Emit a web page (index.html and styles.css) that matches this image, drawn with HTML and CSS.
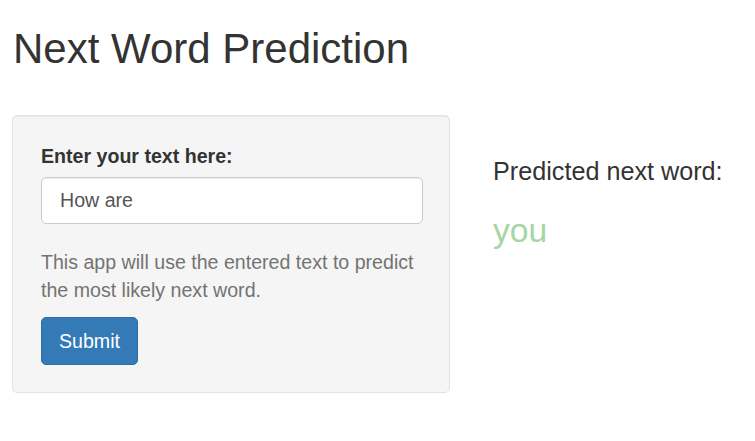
FILE: index.html
```html
<!DOCTYPE html>
<html>
<head>
<meta charset="utf-8">
<title>Next Word Prediction</title>
<link rel="stylesheet" href="styles.css">
</head>
<body>
<div class="page">
  <h2 class="title">Next Word Prediction</h2>
  <div class="row">
    <div class="sidebar">
      <form class="well" onsubmit="return false;">
        <div class="form-group">
          <label class="control-label" for="text">Enter your text here:</label>
          <input id="text" class="form-control" type="text" value="How are">
        </div>
        <span class="help-block">This app will use the entered text to predict the most likely next word.</span>
        <button type="submit" class="btn">Submit</button>
      </form>
    </div>
    <div class="main">
      <h4 class="pred-label">Predicted next word:</h4>
      <div class="pred-word">you</div>
    </div>
  </div>
</div>
</body>
</html>
```

FILE: styles.css
```css
* { box-sizing: border-box; }
html, body { margin: 0; padding: 0; background: #fff; }
body {
  font-family: "Liberation Sans", Arial, Helvetica, sans-serif;
  font-size: 19.6px;
  line-height: 1.42857;
  color: #333;
}
.page {
  padding: 0 12px;
}
.title {
  margin: 26px 0 43px 1px;
  font-size: 42px;
  font-weight: 500;
  line-height: 1.1;
  color: #333;
}
.row {
  display: flex;
  align-items: flex-start;
}
.sidebar {
  width: 438px;
  flex: none;
}
.well {
  margin: 0;
  min-height: 28px;
  padding: 27px 27px 27px 28px;
  background: #f5f5f5;
  border: 1px solid #e3e3e3;
  border-radius: 5px;
  box-shadow: inset 0 1px 1px rgba(0,0,0,.05);
}
.form-group {
  margin-bottom: 24px;
}
.control-label {
  display: block;
  font-weight: bold;
  margin-bottom: 6px;
}
.form-control {
  display: block;
  width: 382px;
  height: 47px;
  padding: 8px 17px 8px 18px;
  font-family: inherit;
  font-size: 19.6px;
  line-height: 1.42857;
  color: #555;
  background: #fff;
  border: 1.4px solid #ccc;
  border-radius: 5px;
  box-shadow: inset 0 1px 1px rgba(0,0,0,.075);
  outline: none;
}
.help-block {
  display: block;
  margin: 0 0 13px;
  color: #737373;
  line-height: 28px;
}
.btn {
  display: inline-block;
  height: 48px;
  padding: 8px 17px;
  font-family: inherit;
  font-size: 19.6px;
  line-height: 28px;
  color: #fff;
  background: #337ab7;
  border: 1.4px solid #2e6da4;
  border-radius: 5px;
  cursor: pointer;
}
.main {
  padding-left: 43px;
  padding-top: 43px;
}
.pred-label {
  margin: 0;
  font-size: 25.2px;
  font-weight: 500;
  line-height: 1.1;
  color: #333;
}
.pred-word {
  margin-top: 27px;
  font-size: 33.6px;
  line-height: 1.1;
  color: #a5d6a5;
}
```
